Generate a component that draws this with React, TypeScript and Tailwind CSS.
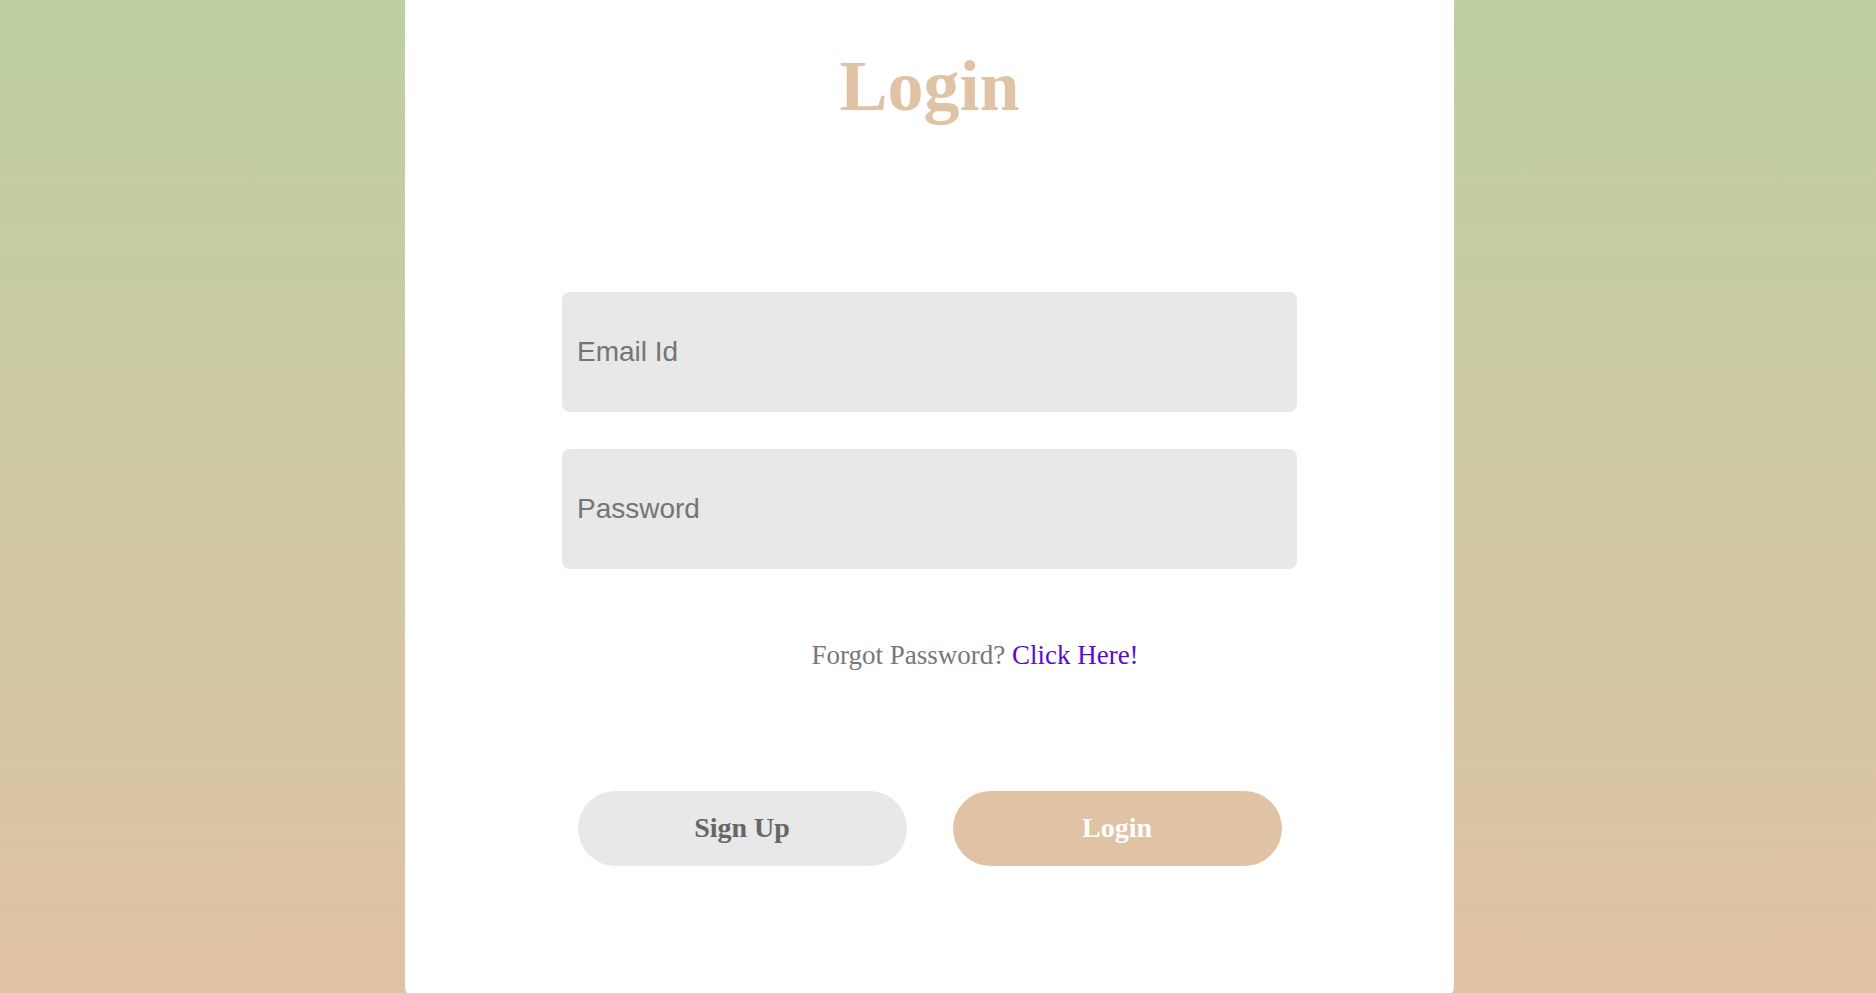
import React from "react";

export default function App() {
  return (
    <div className="h-[993px] overflow-hidden bg-linear-to-b from-[#bdd09f] to-[#e0c2a4]">
      <div className="ml-[405px] w-[1049px] h-[997px] bg-white rounded-b-[10px] flex flex-col items-center">
        <h1 className="pt-[50px] text-[72px] leading-none font-bold text-[#e0c2a4] font-['Liberation_Serif','Times_New_Roman',serif]">
          Login
        </h1>

        <div className="mt-[170px] w-[735px] flex flex-col gap-[37px]">
          <input
            type="email"
            placeholder="Email Id"
            className="h-[120px] w-full rounded-lg bg-[#e8e8e8] pl-[15px] text-[28px] text-[#444] placeholder:text-[#757575] outline-none font-['Liberation_Sans',Arial,sans-serif]"
          />
          <input
            type="password"
            placeholder="Password"
            className="h-[120px] w-full rounded-lg bg-[#e8e8e8] pl-[15px] text-[28px] text-[#444] placeholder:text-[#757575] outline-none font-['Liberation_Sans',Arial,sans-serif]"
          />
        </div>

        <p className="mt-[73px] pl-[91px] text-[27px] leading-none text-[#777] font-['Liberation_Serif','Times_New_Roman',serif]">
          Forgot Password? <a href="#" className="text-[#5b0ccf]">Click Here!</a>
        </p>

        <div className="mt-[122px] flex gap-[46px]">
          <button className="h-[75px] w-[329px] rounded-full bg-[#e8e8e8] flex items-center justify-center pb-[2px] text-[28px] leading-none font-bold text-[#666] font-['Liberation_Serif','Times_New_Roman',serif]">
            Sign Up
          </button>
          <button className="h-[75px] w-[329px] rounded-full bg-[#e0c2a4] flex items-center justify-center pb-[2px] text-[28px] leading-none font-bold text-white font-['Liberation_Serif','Times_New_Roman',serif]">
            Login
          </button>
        </div>
      </div>
    </div>
  );
}
